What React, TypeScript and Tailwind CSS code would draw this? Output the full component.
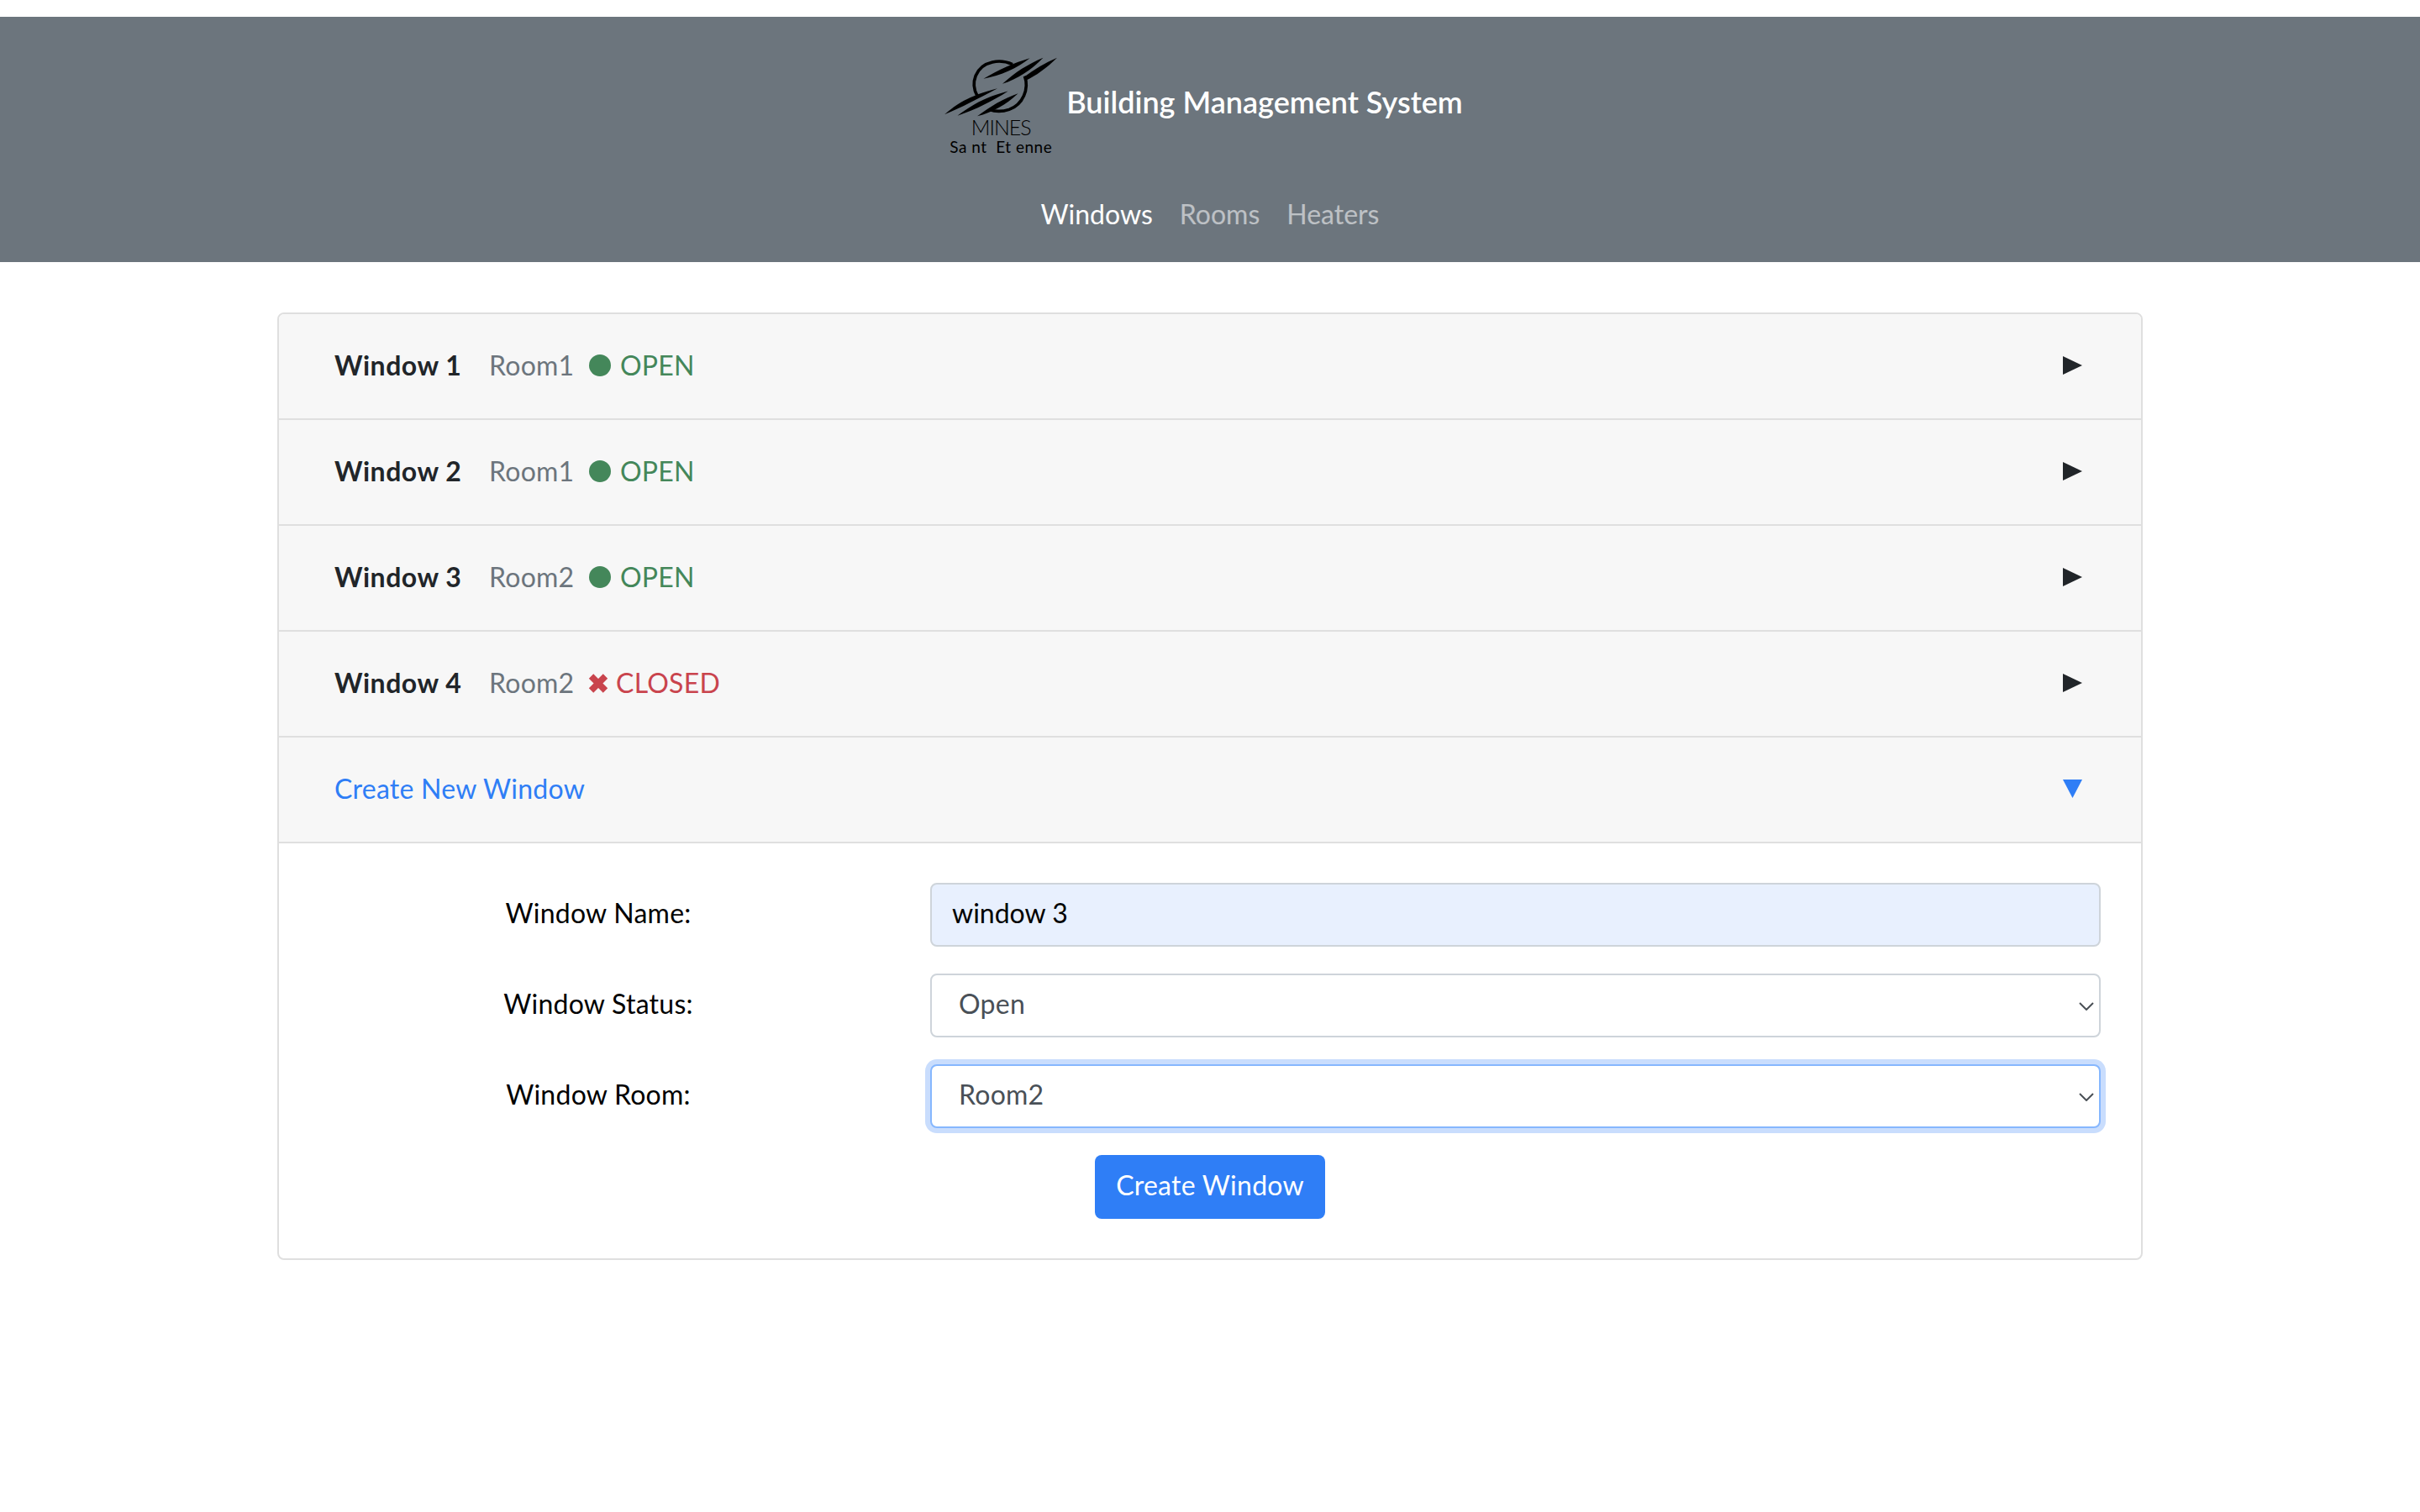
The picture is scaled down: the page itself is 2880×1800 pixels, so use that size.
import React from "react";

const font = "font-['Lato','Noto_Sans',sans-serif]";

const windows = [
  { name: "Window 1", room: "Room1", open: true },
  { name: "Window 2", room: "Room1", open: true },
  { name: "Window 3", room: "Room2", open: true },
  { name: "Window 4", room: "Room2", open: false },
];

function Logo() {
  return (
    <div className="flex w-[140px] flex-col items-center text-black">
      <svg viewBox="60 50 420 220" className="block h-[73px] w-[140px]">
        <path d="M186 196 C160 150 178 88 240 74 C262 69 288 71 312 82" fill="none" stroke="#000" strokeWidth="11" />
        <path d="M356 124 C372 170 350 226 300 244 C276 252 250 252 228 244" fill="none" stroke="#000" strokeWidth="11" />
        <path d="M68 262 C110 226 150 196 258 168 C190 204 130 236 68 262 Z" fill="#000" />
        <path d="M115 266 C160 232 210 200 296 178 C240 214 180 244 115 266 Z" fill="#000" />
        <path d="M186 268 C230 234 280 204 332 186 C290 226 240 254 186 268 Z" fill="#000" />
        <path d="M208 134 C260 102 320 76 374 60 C330 96 270 122 208 134 Z" fill="#000" />
        <path d="M276 152 C320 110 370 80 422 58 C380 102 330 134 276 152 Z" fill="#000" />
        <path d="M352 128 C390 100 430 76 472 58 C436 94 396 122 360 140 Z" fill="#000" />
      </svg>
      <span className="text-[25px] leading-[25px] font-light tracking-[-1px]">MINES</span>
      <span className="text-[19px] leading-[22px] tracking-[0.5px] whitespace-pre">Sa nt  Et enne</span>
    </div>
  );
}

function Chevron() {
  return (
    <svg viewBox="0 0 18 10" className="pointer-events-none absolute top-[34px] right-[8px] h-[10px] w-[18px]">
      <path d="M1 1 L9 9 L17 1" fill="none" stroke="#4a5056" strokeWidth="2" />
    </svg>
  );
}

function WindowRow({ name, room, open }: { name: string; room: string; open: boolean }) {
  return (
    <div className="flex h-[126px] items-center border-b-2 border-[#dfdfdf] bg-[#f7f7f7] pr-[70px] pb-[2px] pl-[66px]">
      <span className="w-[184px] font-bold tracking-[0.5px] text-[#212529]">{name}</span>
      <span className="w-[118px] text-[#6c757d]">{room}</span>
      {open ? (
        <span className="flex items-center text-[#44875a]">
          <span className="mr-[11px] ml-[1px] h-[26px] w-[26px] rounded-full bg-[#44875a]" />
          OPEN
        </span>
      ) : (
        <span className="flex items-center text-[#c9444d]">
          <svg viewBox="0 0 24 24" className="mr-[9px] h-[23px] w-[24px]">
            <path d="M6 6 L18 18 M18 6 L6 18" fill="none" stroke="#c9444d" strokeWidth="8" strokeLinecap="square" />
          </svg>
          CLOSED
        </span>
      )}
      <svg viewBox="0 0 23 22" className="ml-auto h-[22px] w-[23px]">
        <path d="M0 0 L23 11 L0 22 Z" fill="#212529" />
      </svg>
    </div>
  );
}

function FormRow({ label, children }: { label: string; children: React.ReactNode }) {
  return (
    <div className="flex h-[76px] items-center">
      <label className="mr-[63px] w-[664px] pb-[5px] text-center text-black">{label}</label>
      <div className="relative flex-1">{children}</div>
    </div>
  );
}

export default function App() {
  return (
    <div className={`min-h-screen bg-white pt-[20px] text-[32px] leading-[48px] tracking-[0.25px] ${font}`}>
      <header className="flex h-[292px] flex-col items-center bg-[#6c757d] tracking-normal">
        <div className="mt-[46px] flex items-start pr-[18px]">
          <Logo />
          <span className="mt-[25px] ml-[8px] text-[36px] leading-[60px] font-semibold text-white">
            Building Management System
          </span>
        </div>
        <nav className="mt-[45px] flex gap-[32px]">
          <a className="text-white">Windows</a>
          <a className="text-white/55">Rooms</a>
          <a className="text-white/55">Heaters</a>
        </nav>
      </header>

      <main className="mx-auto mt-[60px] w-[2220px] overflow-hidden rounded-[8px] border-2 border-[#dfdfdf]">
        {windows.map((w) => (
          <WindowRow key={w.name} name={w.name} room={w.room} open={w.open} />
        ))}

        <div className="flex h-[126px] items-center border-b-2 border-[#dfdfdf] bg-[#f7f7f7] pr-[70px] pb-[2px] pl-[66px] text-[#2f7ef6]">
          Create New Window
          <svg viewBox="0 0 23 22" className="ml-auto h-[22px] w-[23px]">
            <path d="M0 0 L23 0 L11.5 22 Z" fill="#2f7ef6" />
          </svg>
        </div>

        <form className="flex flex-col gap-[32px] px-[48px] pt-[47px] pb-[47px]">
          <FormRow label="Window Name:">
            <input
              defaultValue="window 3"
              className="h-[76px] w-full rounded-[8px] border-2 border-[#ced4da] bg-[#e8f0fe] px-[24px] pb-[5px] tracking-normal text-black outline-none"
            />
          </FormRow>
          <FormRow label="Window Status:">
            <select
              defaultValue="Open"
              className="h-[76px] w-full appearance-none rounded-[8px] border-2 border-[#ced4da] bg-white pr-[72px] pb-[5px] pl-[32px] text-[#495057] outline-none"
            >
              <option>Open</option>
              <option>Closed</option>
            </select>
            <Chevron />
          </FormRow>
          <FormRow label="Window Room:">
            <select
              defaultValue="Room2"
              className="h-[76px] w-full appearance-none rounded-[8px] border-2 border-[#86b7fe] bg-white pr-[72px] pb-[5px] pl-[32px] text-[#495057] shadow-[0_0_0_6px_#c9ddfd] outline-none"
            >
              <option>Room1</option>
              <option>Room2</option>
            </select>
            <Chevron />
          </FormRow>
          <div className="flex justify-center">
            <button type="button" className="h-[76px] w-[274px] rounded-[8px] bg-[#2f7ef6] pb-[5px] text-white">
              Create Window
            </button>
          </div>
        </form>
      </main>
    </div>
  );
}
